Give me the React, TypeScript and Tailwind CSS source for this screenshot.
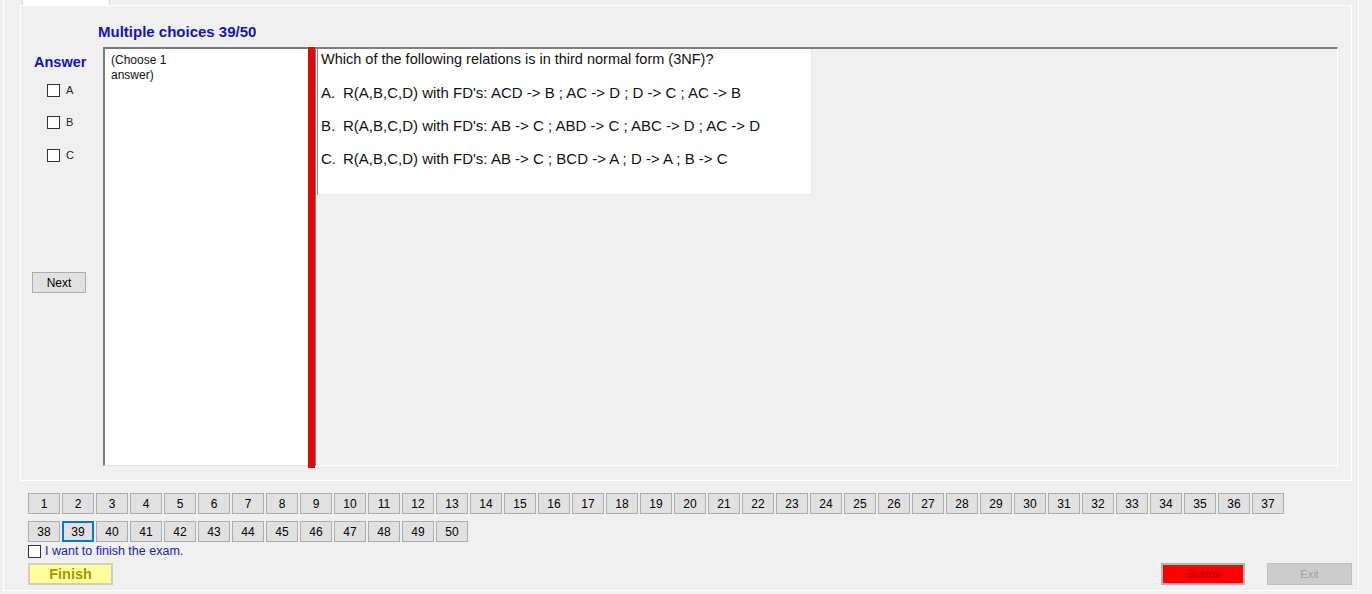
const OPTIONS = [
  ["A.", "R(A,B,C,D) with FD's: ACD -> B ; AC -> D ; D -> C ; AC -> B"],
  ["B.", "R(A,B,C,D) with FD's: AB -> C ; ABD -> C ; ABC -> D ; AC -> D"],
  ["C.", "R(A,B,C,D) with FD's: AB -> C ; BCD -> A ; D -> A ; B -> C"],
];

const CURRENT = 39;

function Box() {
  return <span className="block w-[13px] h-[13px] bg-white border border-[#333333]" />;
}

function NavButton({ n }: { n: number }) {
  const active = n === CURRENT;
  return (
    <button
      className={
        active
          ? "w-[32px] h-[21px] bg-[#e1e1e1] border-2 border-[#0078d7] text-[12px] leading-none text-black"
          : "w-[32px] h-[21px] bg-[#e1e1e1] border border-[#adadad] text-[12px] leading-none text-black"
      }
    >
      {n}
    </button>
  );
}

export default function App() {
  const row1 = Array.from({ length: 37 }, (_, i) => i + 1);
  const row2 = Array.from({ length: 13 }, (_, i) => i + 38);

  return (
    <div className="w-[1372px] h-[594px] bg-[#f0f0f0] overflow-hidden font-['Liberation_Sans',Arial,sans-serif]">
      <div className="ml-[3px] w-[1356px] h-[591px] border-l border-r border-b border-white">
        {/* tab header stub */}
        <div className="h-[5px] pl-[18px]">
          <div className="w-[88px] h-full bg-white border-x border-[#d9d9d9]" />
        </div>

        {/* tab page */}
        <div className="ml-[16px] w-[1332px] h-[476px] border border-white flex flex-col">
          <div className="h-[41px] pl-[77px] pt-[17px] text-[15px] leading-[18px] font-bold text-[#1515b0]">
            Multiple choices 39/50
          </div>

          <div className="h-[419px] flex pr-[13px]">
            {/* answer column */}
            <div className="w-[82px] flex flex-col">
              <div className="mt-[7px] pl-[13px] text-[14.5px] leading-[17px] font-bold text-[#1515b0]">Answer</div>
              {["A", "B", "C"].map((l, i) => (
                <div key={l} className={(i === 0 ? "mt-[13px]" : i === 1 ? "mt-[19px]" : "mt-[20px]") + " pl-[26px] h-[13px] flex items-center gap-[6px]"}>
                  <Box />
                  <span className="text-[11px] leading-none text-[#222]">{l}</span>
                </div>
              ))}
              <button className="mt-[110px] ml-[11px] w-[54px] h-[21px] bg-[#e1e1e1] border border-[#adadad] text-[12px] leading-none text-black">
                Next
              </button>
            </div>

            {/* hint textbox */}
            <div className="w-[205px] h-full bg-white border-l-2 border-t-2 border-[#7a7a7a] border-b border-b-[#e3e3e3] pl-[6px] pt-[4px] text-[12px] leading-[15px] text-[#111]">
              (Choose 1
              <br />
              answer)
            </div>

            <div className="w-[7px] h-[421px] bg-[#e00a0a]" />

            {/* question panel */}
            <div className="flex-1 h-full border-t-2 border-l border-[#7f7f7f] border-b border-b-white border-r border-r-white">
              <div className="ml-[1px] w-[495px] h-[146px] bg-white border-l border-[#8a8a8a] border-r border-r-[#e8e8e8] border-b border-b-[#e8e8e8] pl-[3px] pt-[2px] flex flex-col gap-[16px] text-[#111]">
                <div className="text-[14.5px] leading-[17px]">Which of the following relations is in third normal form (3NF)?</div>
                {OPTIONS.map(([k, o]) => (
                  <div key={k} className="flex text-[15px] leading-[17px]">
                    <span className="w-[22px]">{k}</span>
                    <span className="whitespace-pre">{o}</span>
                  </div>
                ))}
              </div>
            </div>
          </div>
        </div>

        {/* question navigation */}
        <div className="pl-[24px] pt-[12px] flex flex-col">
          <div className="flex gap-[2px]">
            {row1.map((n) => (
              <NavButton key={n} n={n} />
            ))}
          </div>
          <div className="mt-[7px] flex gap-[2px]">
            {row2.map((n) => (
              <NavButton key={n} n={n} />
            ))}
          </div>
          <div className="mt-[3px] h-[13px] flex items-center gap-[4px]">
            <Box />
            <span className="text-[12.5px] leading-none text-[#2020a8]">I want to finish the exam.</span>
          </div>
          <div className="mt-[5px] flex items-center justify-between pr-[6px]">
            <button className="w-[85px] h-[22px] bg-[#ffff9e] border-2 border-[#cfcfc0] text-[14.5px] leading-none font-bold text-[#9c9c00]">
              Finish
            </button>
            <div className="flex gap-[22px]">
              <button className="w-[84px] h-[22px] bg-[#ff0000] border-2 border-[#b4b4b4] text-[11px] leading-none text-[#b80000]">
                Submit
              </button>
              <button className="w-[85px] h-[22px] bg-[#cccccc] border border-[#bfbfbf] text-[11px] leading-none text-[#a3a3a3]">
                Exit
              </button>
            </div>
          </div>
        </div>
      </div>
    </div>
  );
}
